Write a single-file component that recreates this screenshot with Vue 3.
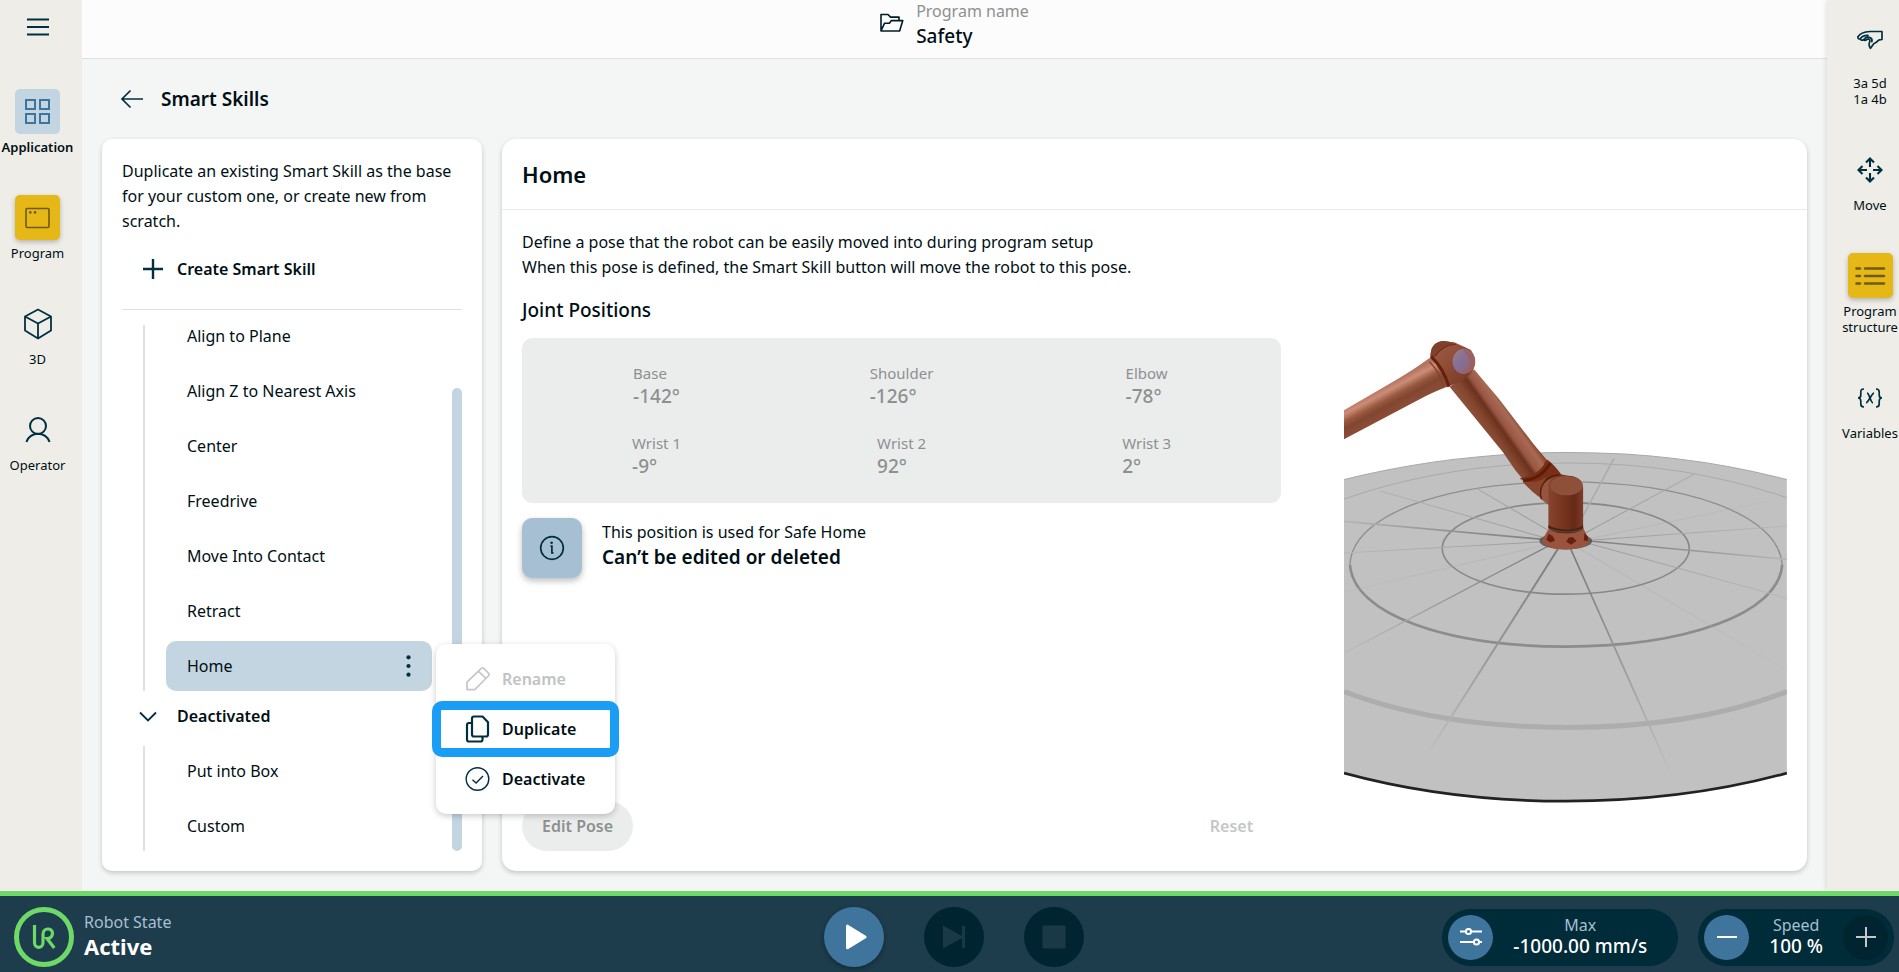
<template>
  <div class="screen">
    <div class="workspace">
      <nav class="sidebar sidebar-left">
        <button class="menu-btn" aria-label="Menu">
          <svg width="24" height="20" viewBox="0 0 24 20">
            <path d="M1 2.5h22M1 10h22M1 17.5h22" stroke="#00303f" stroke-width="2" />
          </svg>
        </button>

        <button class="nav-item active">
          <span class="tile tile-blue">
            <svg width="27" height="27" viewBox="0 0 27 27" fill="none" stroke="#3f759c" stroke-width="2">
              <path d="M2 2h9v9H2zM16 2h9v9h-9zM2 16h9v9H2zM16 16h9v9h-9z" />
            </svg>
          </span>
          <span class="nav-label">Application</span>
        </button>

        <button class="nav-item">
          <span class="tile tile-yellow">
            <svg width="27" height="22" viewBox="0 0 27 22" fill="none" stroke="#705a10" stroke-width="1.6">
              <rect x="2" y="1.5" width="23" height="19" rx="1" />
              <circle cx="6.3" cy="5.4" r="1.3" fill="#705a10" stroke="none" />
              <circle cx="11" cy="5.4" r="1.3" fill="#705a10" stroke="none" />
            </svg>
          </span>
          <span class="nav-label">Program</span>
        </button>

        <button class="nav-item">
          <span class="tile">
            <svg width="30" height="32" viewBox="0 0 30 32" fill="none" stroke="#00303f" stroke-width="1.8" stroke-linejoin="round">
              <path d="M15 1.5 28 8.5v14L15 30.5 2 22.5v-14zM2 8.5l13 7 13-7M15 15.5v15" />
            </svg>
          </span>
          <span class="nav-label">3D</span>
        </button>

        <button class="nav-item">
          <span class="tile">
            <svg width="28" height="28" viewBox="0 0 28 28" fill="none" stroke="#00303f" stroke-width="2">
              <circle cx="14" cy="10" r="8" />
              <path d="M2.4 26C4 20.8 9 17.8 14 17.8S24 20.8 25.6 26" />
            </svg>
          </span>
          <span class="nav-label">Operator</span>
        </button>
      </nav>

      <main class="main">
        <header class="topbar">
          <svg width="24" height="20" viewBox="0 0 24 20" fill="none" stroke="#001c26" stroke-width="1.6" stroke-linejoin="round">
            <path d="M1 18V1.5h7l2.5 2.6h8.500v3.500M1 18l3.600-7.800h4.800l2-2.600h11.400L19.600 18z" />
          </svg>
          <div class="program">
            <span class="program-label">Program name</span>
            <span class="program-name">Safety</span>
          </div>
        </header>

        <div class="page-title">
          <button class="back-btn" aria-label="Back">
            <svg width="24" height="20" viewBox="0 0 24 20" fill="none" stroke="#00303f" stroke-width="1.7">
              <path d="M23 10H2M10.500 1.500 2 10l8.500 8.500" />
            </svg>
          </button>
          <h1>Smart Skills</h1>
        </div>

        <div class="panels">
          <section class="card skills">
            <p class="intro">
              Duplicate an existing Smart Skill as the base for your custom one, or create new from scratch.
            </p>
            <button class="create-btn">
              <svg width="20" height="20" viewBox="0 0 20 20" stroke="#00303f" stroke-width="2.4">
                <path d="M10 0v20M0 10h20" />
              </svg>
              Create Smart Skill
            </button>

            <div class="list-area">
              <div class="lists">
                <div class="group group-scrolled">
                  <ul>
                    <li v-for="skill in activeSkills" :key="skill">
                      <button class="skill" :class="{ selected: skill === selected }">
                        {{ skill }}
                        <svg v-if="skill === selected" width="5" height="24" viewBox="0 0 5 24" fill="#00303f">
                          <circle cx="2.500" cy="3.300" r="2.100" />
                          <circle cx="2.500" cy="12" r="2.100" />
                          <circle cx="2.500" cy="20.700" r="2.100" />
                        </svg>
                      </button>

                      <div v-if="skill === selected" class="context-menu">
                        <button class="menu-item" disabled>
                          <svg width="26" height="28" viewBox="0 0 26 28" fill="none" stroke="#c4c7c7" stroke-width="1.7" stroke-linejoin="round">
                            <path d="M2 24.600V17.200L16.500 3.200a1.400 1.400 0 0 1 2 0l5.300 5.300a1.400 1.400 0 0 1 0 2L9.800 24.600zM13.500 6.300l7.500 7.300" />
                          </svg>
                          Rename
                        </button>
                        <button class="menu-item highlighted">
                          <svg width="26" height="28" viewBox="0 0 26 28" fill="none" stroke="#00303f" stroke-width="2.2" stroke-linejoin="round">
                            <path d="M9 1.500h8.500l5.500 5.700v12.300a2 2 0 0 1-2 2H9a2 2 0 0 1-2-2v-16a2 2 0 0 1 2-2zM7 8H4a2 2 0 0 0-2 2v14.500a2 2 0 0 0 2 2h11.500a2 2 0 0 0 2-2v-3" />
                          </svg>
                          Duplicate
                        </button>
                        <button class="menu-item">
                          <svg width="26" height="28" viewBox="0 0 26 28" fill="none" stroke="#00303f" stroke-width="1.4">
                            <circle cx="12.500" cy="14" r="11.300" />
                            <path d="m7.500 14.800 3.600 3.300 6.900-7" />
                          </svg>
                          Deactivate
                        </button>
                      </div>
                    </li>
                  </ul>
                </div>

                <button class="group-toggle">
                  <svg width="18" height="11" viewBox="0 0 18 11" fill="none" stroke="#00303f" stroke-width="1.8">
                    <path d="m1 1.500 8 8 8-8" />
                  </svg>
                  Deactivated
                </button>

                <div class="group">
                  <ul>
                    <li v-for="skill in deactivatedSkills" :key="skill">
                      <button class="skill">{{ skill }}</button>
                    </li>
                  </ul>
                </div>
              </div>
              <div class="scrollbar"><div class="thumb"></div></div>
            </div>
          </section>

          <section class="card detail">
            <div class="detail-header">
              <h2>Home</h2>
            </div>
            <div class="detail-body">
              <p class="description">
                Define a pose that the robot can be easily moved into during program setup<br />
                When this pose is defined, the Smart Skill button will move the robot to this pose.
              </p>
              <h3>Joint Positions</h3>

              <div class="pose">
                <div class="pose-info">
                  <dl class="joints">
                    <div v-for="joint in joints" :key="joint.name" class="joint">
                      <dt>{{ joint.name }}</dt>
                      <dd>{{ joint.angle }}°</dd>
                    </div>
                  </dl>

                  <div class="notice">
                    <span class="notice-icon">
                      <svg width="26" height="26" viewBox="0 0 26 26" fill="none" stroke="#00303f" stroke-width="1.7">
                        <circle cx="13" cy="13" r="11.300" />
                        <path d="M11.500 11.200h1.400v6.600h1.600" />
                        <circle cx="12.600" cy="7.800" r="1.300" fill="#00303f" stroke="none" />
                      </svg>
                    </span>
                    <div class="notice-text">
                      <span>This position is used for Safe Home</span>
                      <strong>Can’t be edited or deleted</strong>
                    </div>
                  </div>

                  <div class="actions">
                    <button class="edit-btn" disabled>Edit Pose</button>
                    <button class="reset-btn" disabled>Reset</button>
                  </div>
                </div>

                <svg class="robot" viewBox="72 54 1326 1410" role="img" aria-label="Robot pose">
                  <defs>
                    <radialGradient id="fade" gradientUnits="userSpaceOnUse" cx="735" cy="660" r="760">
                      <stop offset="0" stop-color="#7a7a7a" />
                      <stop offset="0.5" stop-color="#969696" />
                      <stop offset="1" stop-color="#c0c0c0" />
                    </radialGradient>
                    <radialGradient id="fadeLight" gradientUnits="userSpaceOnUse" cx="735" cy="660" r="760">
                      <stop offset="0" stop-color="#989898" />
                      <stop offset="1" stop-color="#bcbcbc" />
                    </radialGradient>
                    <linearGradient id="forearm" gradientUnits="userSpaceOnUse" x1="190" y1="200" x2="230" y2="275">
                      <stop offset="0" stop-color="#b5745f" />
                      <stop offset="0.2" stop-color="#cc8d78" />
                      <stop offset="0.45" stop-color="#99583f" />
                      <stop offset="0.65" stop-color="#824630" />
                      <stop offset="1" stop-color="#8c4d38" />
                    </linearGradient>
                    <linearGradient id="upperArm" gradientUnits="userSpaceOnUse" x1="475" y1="315" x2="560" y2="255">
                      <stop offset="0" stop-color="#8f513b" />
                      <stop offset="0.25" stop-color="#82452e" />
                      <stop offset="0.48" stop-color="#6c311d" />
                      <stop offset="0.6" stop-color="#985742" />
                      <stop offset="0.85" stop-color="#a96a55" />
                      <stop offset="1" stop-color="#87472f" />
                    </linearGradient>
                    <linearGradient id="base" x1="0" x2="1" y1="0" y2="0">
                      <stop offset="0" stop-color="#87442f" />
                      <stop offset="0.35" stop-color="#7a3621" />
                      <stop offset="0.75" stop-color="#672a17" />
                      <stop offset="1" stop-color="#7e3c28" />
                    </linearGradient>
                    <linearGradient id="joint" x1="0" x2="1" y1="0" y2="1">
                      <stop offset="0" stop-color="#a05f49" />
                      <stop offset="0.5" stop-color="#8b4b35" />
                      <stop offset="1" stop-color="#74331e" />
                    </linearGradient>
                    <linearGradient id="cap" x1="0" x2="1" y1="0" y2="1">
                      <stop offset="0" stop-color="#a08078" />
                      <stop offset="0.4" stop-color="#85709a" />
                      <stop offset="1" stop-color="#96605f" />
                    </linearGradient>
                  </defs>

                  <!-- floor -->
                  <path d="M72 478Q390 399 735 397T1398 478V1357Q1090 1441 735 1441T72 1357z" fill="#c1c1c1" />
                  <path d="M72 478Q390 399 735 397T1398 478" fill="none" stroke="#a8a8a8" stroke-width="3" />
                  <path d="M72 1357Q380 1441 735 1441T1398 1357" fill="none" stroke="#222" stroke-width="8" />
                  <g fill="none">
                    <path d="M72 536Q380 430 735 428T1398 532" stroke="#aaa" stroke-width="3" />
                    <path d="M72 1113Q350 1219 735 1220T1398 1113" stroke="#adadad" stroke-width="15" />
                    <path d="M90 733C96 580 380 485 735 485S1374 580 1384 733" stroke="#8e8e8e" stroke-width="4" />
                    <path d="M90 733C100 882 380 978 735 978S1374 882 1384 733" stroke="#8c8c8c" stroke-width="8" />
                    <ellipse cx="736" cy="684" rx="370" ry="137" stroke="#888" stroke-width="5" />
                  </g>
                  <g stroke="url(#fade)">
                    <path d="M735 650 265 1390" stroke-width="6" />
                    <path d="M735 650 1060 1380" stroke-width="5" />
                    <path d="M735 655 1398 717" stroke-width="5" />
                    <path d="M735 663 72 603" stroke-width="5" />
                    <path d="M735 650 72 998" stroke-width="4" />
                  </g>
                  <path d="M770 620 880 415" stroke="#acacac" stroke-width="5" />
                  <g stroke="url(#fadeLight)" stroke-width="3">
                    <path d="M735 650 1398 833M735 665 1398 617M735 670 1120 462M735 660 72 698M735 670 180 512M735 660 470 505" />
                    <path d="M735 660 1398 1050M735 670 1330 545M735 660 72 815" opacity="0.3" />
                  </g>
                  <ellipse cx="736" cy="662" rx="79" ry="25" fill="#4a4a4a" opacity="0.8" />

                  <!-- forearm -->
                  <path d="M72 270 220 184Q272 155 328 114L350 112 395 192 386 198Q330 220 300 237L72 357z" fill="url(#forearm)" />
                  <path d="M328 125Q358 155 370 202" fill="none" stroke="#814431" stroke-width="4" />

                  <!-- upper arm -->
                  <path d="M388 200 420 180 462 148 535 235 640 372 680 420 667 468 608 478 585 450 548 396z" fill="url(#upperArm)" />
                  <path d="M676 424Q668 460 600 476" fill="none" stroke="#75321d" stroke-width="4" />

                  <!-- elbow -->
                  <path d="M331 112Q330 64 372 63L405 68 435 82 452 90Q472 118 459 150 440 180 388 198 376 160 331 112z" fill="url(#joint)" />
                  <path d="M331 112Q330 64 372 63L405 68Q368 78 343 112z" fill="#81402b" />
                  <path d="M333 110Q370 145 386 200" fill="none" stroke="#652009" stroke-width="9" />
                  <path d="M346 108Q364 76 408 72" fill="none" stroke="#6d2c18" stroke-width="3" />
                  <ellipse cx="431" cy="124" rx="34" ry="38" fill="url(#cap)" />
                  <path d="M428 86Q463 90 464 125 460 158 430 162 455 140 450 123L438 104z" fill="#a25c50" opacity="0.7" />

                  <!-- shoulder -->
                  <path d="M680 418Q700 432 722 462L770 475 700 555Q650 534 602 474 656 468 680 418z" fill="#782f18" />
                  <path d="M608 480Q660 478 690 428" fill="none" stroke="#5f1c05" stroke-width="9" />
                  <path d="M606 484Q655 490 676 470L664 535Q634 515 606 484z" fill="#87452e" />
                  <path d="M737 466Q690 466 668 492 655 512 661 536L688 556 700 490z" fill="#965540" />
                  <path d="M718 464Q675 466 662 505 658 522 663 536" fill="none" stroke="#541b09" stroke-width="4" />

                  <!-- base -->
                  <path d="M683 628 664 661Q676 687 736 687T807 661L788 622z" fill="#9a533c" />
                  <path d="M684 640 678 658 690 666 704 660 696 646zM744 652 738 664 752 673 768 662 757 650zM792 638 790 660 803 662 802 648z" fill="#652010" />
                  <path d="M684 498Q685 466 735 466T788 503V624Q776 639 736 639T684 624z" fill="url(#base)" />
                  <path d="M684 615Q710 628 740 628T788 615V625Q770 639 736 639T684 624z" fill="#50200e" />
                  <path d="M685 625Q706 634 737 635T786 625" fill="none" stroke="#514537" stroke-width="4" />
                  <ellipse cx="738" cy="496" rx="49" ry="29" fill="#8f5039" />
                </svg>
              </div>
            </div>
          </section>
        </div>
      </main>

      <nav class="sidebar sidebar-right">
        <button class="nav-item hand-item">
          <span class="tile">
            <svg width="28" height="20" viewBox="0 0 28 20" fill="none" stroke="#00303f" stroke-width="1.7" stroke-linejoin="round" stroke-linecap="round">
              <path d="M26 1.500H14C8.500 1.700 4 3 1.800 7c0 1.500 1 2.300 2.400 1.900.4 1.500 2 1.600 3.400.9.800.7 2.200.5 3.200-.3 1.300-.9 2.700-.5 3 .8.300 1.500-.9 2.700-.7 4.300.1 1.500.8 2.900 1.300 3.700 1.700-1.700 2.300-4.400 5-5.500 1.800-.6 2.600-2.700 4.100-3l2.500-.3zM4.200 8.900C5.700 6.400 8.500 5.300 12 5.400M7.600 9.800c1.600-2.300 4.200-3.300 6.400-2.200 1.600.8 2.400 2.300 1.800 4" />
            </svg>
          </span>
          <span class="nav-label">3a 5d<br />1a 4b</span>
        </button>

        <button class="nav-item">
          <span class="tile">
            <svg width="26" height="26" viewBox="0 0 26 26" fill="none" stroke="#00303f" stroke-width="2.1">
              <path d="M13 10V2M9 5.500l4-4 4 4M13 16v8M9 20.500l4 4 4-4M10 13H2M5.500 9l-4 4 4 4M16 13h8M20.500 9l4 4-4 4" />
            </svg>
          </span>
          <span class="nav-label">Move</span>
        </button>

        <button class="nav-item">
          <span class="tile tile-yellow">
            <svg width="32" height="20" viewBox="0 0 32 20" stroke="#705a10" stroke-width="2.6" stroke-linecap="round">
              <path d="M2.500 2.500h3.500M11 2.500h19M2.500 10h3.500M11 10h19M2.500 17.500h3.500M11 17.500h19" />
            </svg>
          </span>
          <span class="nav-label">Program<br />structure</span>
        </button>

        <button class="nav-item">
          <span class="tile">
            <svg width="26" height="20" viewBox="0 0 26 20" fill="none" stroke="#00303f" stroke-width="1.7">
              <path d="M7 1C4.200 1 3.800 2 3.800 4v3C3.800 9 3 10 1 10c2 0 2.800 1 2.800 3v3c0 2 .4 3 3.200 3M19 1c2.800 0 3.200 1 3.200 3v3c0 2 .8 3 2.800 3-2 0-2.800 1-2.800 3v3c0 2-.4 3-3.200 3M9 14.800c2 0 6-9.600 8-9.600M10 5.200c2.500 0 3.500 9.600 6 9.600" />
            </svg>
          </span>
          <span class="nav-label">Variables</span>
        </button>
      </nav>
    </div>

    <footer class="footer">
      <div class="robot-state">
        <button class="state-btn" aria-label="Robot state">
          <svg width="26" height="26" viewBox="0 0 26 26" fill="none" stroke="#6fd968" stroke-width="3.2">
            <path d="M3.500 1v17.500c0 6.500 8.500 6.500 8.500 0V10c0-6.500 9.500-6.500 9.500-.8 0 3.600-2.500 5.300-5.500 5.300l7.300 9.500" />
          </svg>
        </button>
        <div class="state-text">
          <span class="footer-label">Robot State</span>
          <span class="state-value">Active</span>
        </div>
      </div>

      <div class="playback">
        <button class="round-btn play" aria-label="Play">
          <svg width="26" height="28" viewBox="0 0 26 28" fill="#fff" stroke="#fff" stroke-width="3" stroke-linejoin="round">
            <path d="M6.500 3.200v21.600L24 14z" />
          </svg>
        </button>
        <button class="round-btn" disabled aria-label="Step">
          <svg width="24" height="24" viewBox="0 0 24 24" fill="#1a3846">
            <path d="M1 0.500v23L20 13V23h3V1h-3v10z" />
          </svg>
        </button>
        <button class="round-btn" disabled aria-label="Stop">
          <svg width="24" height="24" viewBox="0 0 24 24">
            <rect x="0.500" y="0.500" width="23" height="23" rx="1" fill="#1a3846" />
          </svg>
        </button>
      </div>

      <div class="limits">
        <div class="pill">
          <button class="pill-btn" aria-label="Speed limit settings">
            <svg width="24" height="18" viewBox="0 0 24 18" fill="none" stroke="#fff" stroke-width="2">
              <path d="M1 3.500h5.500M12.500 3.500H23M1 14h13.500M20.500 14H23" />
              <circle cx="9.500" cy="3.500" r="2.600" />
              <circle cx="17.500" cy="14" r="2.600" />
            </svg>
          </button>
          <div class="pill-text pill-text-wide">
            <span class="footer-label">Max</span>
            <span class="pill-value">-1000.00 mm/s</span>
          </div>
        </div>
        <div class="pill">
          <button class="pill-btn" aria-label="Decrease speed">
            <svg width="20" height="20" viewBox="0 0 20 20" stroke="#fff" stroke-width="2"><path d="M0 10h20" /></svg>
          </button>
          <div class="pill-text">
            <span class="footer-label">Speed</span>
            <span class="pill-value">100 %</span>
          </div>
          <button class="pill-btn pill-btn-dark" disabled aria-label="Increase speed">
            <svg width="20" height="20" viewBox="0 0 20 20" stroke="#c3c8ca" stroke-width="2"><path d="M0 10h20M10 0v20" /></svg>
          </button>
        </div>
      </div>
    </footer>
  </div>
</template>

<script setup>
import { ref } from 'vue'

const selected = ref('Home')

const activeSkills = [
  'Align to Plane',
  'Align Z to Nearest Axis',
  'Center',
  'Freedrive',
  'Move Into Contact',
  'Retract',
  'Home',
]

const deactivatedSkills = ['Put into Box', 'Custom']

const joints = [
  { name: 'Base', angle: -142 },
  { name: 'Shoulder', angle: -126 },
  { name: 'Elbow', angle: -78 },
  { name: 'Wrist 1', angle: -9 },
  { name: 'Wrist 2', angle: 92 },
  { name: 'Wrist 3', angle: 2 },
]
</script>

<style>
body {
  margin: 0;
}
</style>

<style scoped>
.screen {
  min-height: 100vh;
  display: flex;
  flex-direction: column;
  font-family: "Noto Sans", "Open Sans", sans-serif;
  font-size: 16px;
  color: #000f14;
  background: #f4f6f5;
}

.screen * {
  box-sizing: border-box;
}

button {
  font: inherit;
  color: inherit;
  background: none;
  border: none;
  padding: 0;
  cursor: pointer;
}

button:disabled {
  cursor: default;
}

svg {
  display: block;
  flex-shrink: 0;
}

h1, h2, h3, p, ul, dl, dd {
  margin: 0;
  padding: 0;
}

ul {
  list-style: none;
}

.workspace {
  flex: 1;
  display: flex;
}

/* side navigation */
.sidebar {
  flex-shrink: 0;
  display: flex;
  flex-direction: column;
  gap: 40px;
  background: #eeede8;
}

.sidebar-left {
  width: 82px;
  padding-right: 7px;
}

.sidebar-right {
  width: 72px;
  padding: 17px 0 0 14px;
  box-shadow: 0 0 6px rgba(0, 0, 0, 0.15);
}

.menu-btn {
  height: 49px;
  padding-top: 5px;
  display: flex;
  align-items: center;
  justify-content: center;
}

.nav-item {
  display: flex;
  flex-direction: column;
  align-items: center;
  gap: 5px;
  font-size: 13px;
  line-height: 16px;
}

.hand-item {
  gap: 13px;
}

.nav-item.active {
  font-weight: 600;
}

.tile {
  width: 45px;
  height: 45px;
  display: flex;
  align-items: center;
  justify-content: center;
  border-radius: 5px;
}

.tile-blue {
  background: #c3d5e1;
}

.tile-yellow {
  background: #e5b817;
  box-shadow: 0 2px 5px rgba(0, 0, 0, 0.25);
}

/* main area */
.main {
  flex: 1;
  min-width: 0;
  display: flex;
  flex-direction: column;
}

.topbar {
  height: 59px;
  display: flex;
  justify-content: center;
  gap: 12px;
  background: #fcfcfc;
  border-bottom: 1px solid #dfe1e1;
}

.topbar svg {
  margin-top: 13px;
}

.program {
  display: flex;
  flex-direction: column;
}

.program-label {
  line-height: 22px;
  color: #8d9090;
}

.program-name {
  font-size: 19px;
  font-weight: 500;
  line-height: 28px;
}

.page-title {
  height: 80px;
  padding-left: 38px;
  display: flex;
  align-items: center;
  gap: 17px;
}

.page-title h1 {
  font-size: 19px;
  font-weight: 600;
  line-height: 28px;
}

.panels {
  flex: 1;
  display: flex;
  gap: 20px;
  padding: 0 20px 20px;
}

.card {
  background: #fff;
  box-shadow: 0 2px 5px rgba(0, 0, 0, 0.2);
}

.skills {
  position: relative;
  z-index: 1;
  width: 380px;
  flex-shrink: 0;
  display: flex;
  flex-direction: column;
  padding: 20px;
  border-radius: 10px;
}

.intro {
  line-height: 25px;
}

.create-btn {
  height: 50px;
  margin-top: 10px;
  padding-left: 21px;
  display: flex;
  align-items: center;
  gap: 14px;
  font-weight: 600;
}

.list-area {
  flex: 1;
  display: flex;
  gap: 20px;
  margin-top: 15px;
  padding-top: 15px;
  border-top: 1px solid #dfe1e1;
}

.lists {
  flex: 1;
}

.group {
  margin: 5px 0 0 21px;
  padding-left: 21px;
  border-left: 2px solid #dfe1e1;
}

.group ul {
  display: flex;
  flex-direction: column;
  gap: 5px;
}

.group li {
  position: relative;
}

/* the first group starts partly scrolled out of view */
.group-scrolled {
  margin-top: 0;
  display: flow-root;
}

.group-scrolled ul {
  margin-top: -14px;
}

.skill {
  width: 100%;
  height: 50px;
  padding: 0 21px;
  display: flex;
  align-items: center;
  justify-content: space-between;
  border-radius: 10px;
  text-align: left;
}

.skill.selected {
  background: #c3d5e1;
}

.group-toggle {
  height: 50px;
  padding-left: 17px;
  display: flex;
  align-items: center;
  gap: 20px;
  font-weight: 600;
}

.scrollbar {
  width: 10px;
  display: flex;
  align-items: flex-end;
}

.thumb {
  width: 100%;
  height: 88%;
  border-radius: 5px;
  background: #c3d5e1;
}

.context-menu {
  position: absolute;
  z-index: 2;
  top: 3px;
  left: calc(100% + 4px);
  width: 179px;
  padding: 10px 0;
  border-radius: 10px;
  background: #fff;
  box-shadow: 0 2px 6px rgba(0, 0, 0, 0.22);
}

.menu-item {
  position: relative;
  width: 100%;
  height: 50px;
  padding-left: 29px;
  display: flex;
  align-items: center;
  gap: 11px;
  font-weight: 600;
}

.menu-item:disabled {
  color: #bfc3c3;
}

.highlighted::after {
  content: "";
  position: absolute;
  inset: -3px -4px;
  border: 9px solid #1a9df5;
  border-radius: 10px;
}

/* detail card */
.detail {
  flex: 1;
  min-width: 0;
  display: flex;
  flex-direction: column;
  border-radius: 14px;
}

.detail-header {
  height: 71px;
  padding: 0 20px;
  display: flex;
  align-items: center;
  border-bottom: 1px solid #e8eaea;
}

.detail-header h2 {
  font-size: 22px;
  font-weight: 600;
  line-height: 28px;
}

.detail-body {
  flex: 1;
  display: flex;
  flex-direction: column;
  padding: 20px;
}

.description {
  line-height: 25px;
}

.detail-body h3 {
  margin: 16px 0 14px;
  font-size: 19px;
  font-weight: 500;
  line-height: 28px;
}

.pose {
  flex: 1;
  display: grid;
  grid-template-columns: 12fr 7fr;
  gap: 63px;
}

.pose-info {
  display: flex;
  flex-direction: column;
}

.joints {
  display: grid;
  grid-template-columns: repeat(3, 1fr);
  justify-items: center;
  row-gap: 24px;
  padding: 24px 12px 25px;
  border-radius: 10px;
  background: #ebedec;
  color: #8d9090;
}

.joint dt {
  font-size: 15px;
  line-height: 22px;
}

.joint dd {
  font-size: 19px;
  font-weight: 500;
  line-height: 24px;
}

.notice {
  display: flex;
  gap: 20px;
  margin-top: 15px;
}

.notice-icon {
  width: 60px;
  height: 60px;
  display: flex;
  align-items: center;
  justify-content: center;
  border-radius: 10px;
  background: #a7bfd2;
  box-shadow: 0 3px 6px rgba(0, 0, 0, 0.25);
}

.notice-text {
  display: flex;
  flex-direction: column;
  padding-top: 2px;
  line-height: 25px;
}

.notice-text strong {
  font-size: 19px;
  font-weight: 600;
}

.actions {
  display: flex;
  justify-content: space-between;
  margin-top: auto;
  font-weight: 600;
}

.edit-btn {
  height: 50px;
  padding: 0 20px;
  border-radius: 25px;
  background: #ebedec;
  color: #8d9090;
}

.reset-btn {
  padding: 0 28px;
  color: #c4c7c7;
}

.robot {
  width: 100%;
}

/* footer */
.footer {
  display: grid;
  grid-template-columns: 1fr auto 1fr;
  align-items: center;
  padding: 11px 5px 5px 14px;
  border-top: 5px solid #6fd968;
  background: #1d3c4c;
  color: #fff;
}

.robot-state {
  display: flex;
  align-items: center;
  gap: 10px;
}

.state-btn {
  width: 60px;
  height: 60px;
  display: flex;
  align-items: center;
  justify-content: center;
  border: 5px solid #6fd968;
  border-radius: 50%;
}

.state-text {
  display: flex;
  flex-direction: column;
  padding-bottom: 2px;
}

.footer-label {
  line-height: 20px;
  color: #a7bfd2;
}

.state-value {
  font-size: 22px;
  font-weight: 700;
  line-height: 28px;
}

.playback {
  display: flex;
  gap: 40px;
}

.round-btn {
  width: 60px;
  height: 60px;
  display: flex;
  align-items: center;
  justify-content: center;
  border-radius: 50%;
  background: #002530;
}

.round-btn.play {
  background: #3f759c;
  box-shadow: 0 2px 5px rgba(0, 0, 0, 0.3);
}

.limits {
  display: flex;
  justify-content: flex-end;
  gap: 20px;
}

.pill {
  display: flex;
  align-items: center;
  padding: 6px;
  border-radius: 29px;
  background: #002b38;
}

.pill-btn {
  width: 45px;
  height: 45px;
  display: flex;
  align-items: center;
  justify-content: center;
  border-radius: 50%;
  background: #3f759c;
}

.pill-btn-dark {
  background: #002530;
}

.pill-text {
  display: flex;
  flex-direction: column;
  align-items: center;
  padding: 0 20px 2px;
}

.pill-text-wide {
  padding-right: 25px;
}

.pill-value {
  font-size: 19px;
  font-weight: 500;
  line-height: 23px;
}
</style>
